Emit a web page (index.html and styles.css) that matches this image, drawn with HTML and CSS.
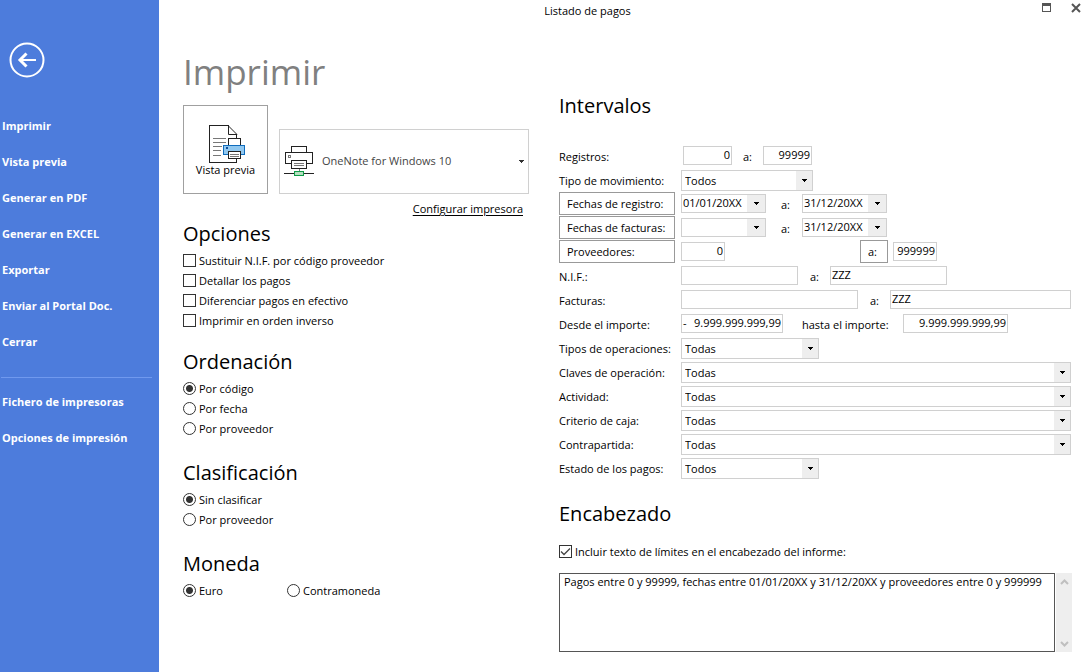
FILE: index.html
```
<!DOCTYPE html>
<html lang="es">
<head>
<meta charset="utf-8">
<title>Listado de pagos</title>
<link rel="stylesheet" href="styles.css">
</head>
<body>
<div class="app">
  <nav class="sidebar">
    <button class="back" type="button" aria-label="Volver">
      <svg width="36" height="36" viewBox="0 0 36 36" fill="none" stroke="#fff">
        <circle cx="18" cy="18" r="16.5" stroke-width="2"/>
        <path d="M27 18H11" stroke-width="2"/>
        <path d="M17.500 11.500L11 18l6.500 6.500" stroke-width="3"/>
      </svg>
    </button>
    <ul class="menu">
      <li><a href="#">Imprimir</a></li>
      <li><a href="#">Vista previa</a></li>
      <li><a href="#">Generar en PDF</a></li>
      <li><a href="#">Generar en EXCEL</a></li>
      <li><a href="#">Exportar</a></li>
      <li><a href="#">Enviar al Portal Doc.</a></li>
      <li><a href="#">Cerrar</a></li>
    </ul>
    <ul class="menu menu-extra">
      <li><a href="#">Fichero de impresoras</a></li>
      <li><a href="#">Opciones de impresión</a></li>
    </ul>
  </nav>

  <div class="main">
    <header class="titlebar">
      <div class="window-title">Listado de pagos</div>
      <div class="window-controls">
        <button type="button" aria-label="Maximizar">
          <svg width="9" height="9" viewBox="0 0 9 9" shape-rendering="crispEdges"><path d="M0 0h9v9H0zM1 3v5h7V3z" fill="#555" fill-rule="evenodd"/></svg>
        </button>
        <button type="button" aria-label="Cerrar ventana">
          <svg width="10" height="10" viewBox="0 0 10 10"><path d="M1 1l8 8M9 1L1 9" stroke="#555" stroke-width="2"/></svg>
        </button>
      </div>
    </header>

    <form class="content">
      <div class="left">
        <h1>Imprimir</h1>
        <div class="printer-row">
          <button class="preview" type="button">
            <svg width="37" height="39" viewBox="0 0 37 39" fill="none" shape-rendering="crispEdges">
              <path d="M28 16V10L19 1H1v37h27v-4" fill="#fff" stroke="none"/>
              <path d="M27.500 14V9.500M19.500 .5H.5v37h27V34" stroke="#222"/>
              <path d="M19.500 .5V9.500H28M19 .5L28 9.500" stroke="#222" shape-rendering="auto"/>
              <path d="M4 13.500h13M4 17.500h13M4 21.500h9M4 25.500h8M4 30.500h8" stroke="#777"/>
              <path d="M19.500 20V13.500h12V20" fill="#fff" stroke="#222"/>
              <path d="M14.500 20.500h21v9h-21z" fill="#91c8f0" stroke="#0f6cbd"/>
              <path d="M17 22h2v2h-2z" fill="#0f4f9c"/>
              <path d="M19.500 26.500h12v7h-12z" fill="#fff" stroke="#222"/>
              <path d="M21 29.500h9M21 31.500h9" stroke="#777"/>
            </svg>
            <span>Vista previa</span>
          </button>
          <div class="printer">
            <svg class="printer-icon" width="30" height="30" viewBox="0 0 30 30" fill="none" shape-rendering="crispEdges">
              <path d="M7.500 6V.5h15V6M7 17.500H1.500V6.500h27v11H23" stroke="#222"/>
              <path d="M4.500 9.500h2v2h-2z" stroke="#777"/>
              <path d="M7.500 14.500h15v8h-15z" fill="#fff" stroke="#222"/>
              <path d="M10 17.500h10M10 19.500h10M15 23v2" stroke="#777"/>
              <path d="M0 27.500h30" stroke="#222"/>
              <path d="M10.500 25.500h9v4h-9z" fill="#b5e0c0" stroke="#109b48"/>
            </svg>
            <select class="printer-select" aria-label="Impresora"><option>OneNote for Windows 10</option></select>
          </div>
        </div>
        <a class="config" href="#">Configurar impresora</a>

        <div class="groups">
          <section class="group">
            <h2>Opciones</h2>
            <label class="choice"><input type="checkbox">Sustituir N.I.F. por código proveedor</label>
            <label class="choice"><input type="checkbox">Detallar los pagos</label>
            <label class="choice"><input type="checkbox">Diferenciar pagos en efectivo</label>
            <label class="choice"><input type="checkbox">Imprimir en orden inverso</label>
          </section>
          <section class="group">
            <h2>Ordenación</h2>
            <label class="choice"><input type="radio" name="orden" checked>Por código</label>
            <label class="choice"><input type="radio" name="orden">Por fecha</label>
            <label class="choice"><input type="radio" name="orden">Por proveedor</label>
          </section>
          <section class="group">
            <h2>Clasificación</h2>
            <label class="choice"><input type="radio" name="clase" checked>Sin clasificar</label>
            <label class="choice"><input type="radio" name="clase">Por proveedor</label>
          </section>
          <section class="group">
            <h2>Moneda</h2>
            <div class="choice-row">
              <label class="choice"><input type="radio" name="moneda" checked>Euro</label>
              <label class="choice"><input type="radio" name="moneda">Contramoneda</label>
            </div>
          </section>
        </div>
      </div>

      <div class="right">
        <h2>Intervalos</h2>
        <div class="fields">
          <div class="field indent">
            <label class="name" for="reg1">Registros:</label>
            <input class="box w-short num" id="reg1" value="0">
            <label class="to" for="reg2">a:</label>
            <input class="box w-short num" id="reg2" value="99999">
          </div>
          <div class="field">
            <label class="name" for="tipo">Tipo de movimiento:</label>
            <select class="w-type" id="tipo"><option>Todos</option></select>
          </div>
          <div class="field">
            <div class="name"><button class="picker" type="button">Fechas de registro:</button></div>
            <div class="date"><input id="fr1" aria-label="Fecha de registro desde" value="01/01/20XX"><button type="button" aria-label="Abrir calendario"></button></div>
            <label class="to to-date" for="fr2">a:</label>
            <div class="date"><input id="fr2" value="31/12/20XX"><button type="button" aria-label="Abrir calendario"></button></div>
          </div>
          <div class="field">
            <div class="name"><button class="picker" type="button">Fechas de facturas:</button></div>
            <div class="date"><input id="ff1" aria-label="Fecha de factura desde"><button type="button" aria-label="Abrir calendario"></button></div>
            <label class="to to-date" for="ff2">a:</label>
            <div class="date"><input id="ff2" value="31/12/20XX"><button type="button" aria-label="Abrir calendario"></button></div>
          </div>
          <div class="field">
            <div class="name"><button class="picker" type="button">Proveedores:</button></div>
            <input class="box w-code num" aria-label="Proveedor desde" value="0">
            <button class="picker picker-to" type="button">a:</button>
            <input class="box w-code num" aria-label="Proveedor hasta" value="999999">
          </div>
          <div class="field">
            <label class="name" for="nif1">N.I.F.:</label>
            <input class="box w-nif" id="nif1">
            <label class="to" for="nif2">a:</label>
            <input class="box w-nif" id="nif2" value="ZZZ">
          </div>
          <div class="field">
            <label class="name" for="fac1">Facturas:</label>
            <input class="box w-invoice" id="fac1">
            <label class="to" for="fac2">a:</label>
            <input class="box grow" id="fac2" value="ZZZ">
          </div>
          <div class="field">
            <label class="name" for="imp1">Desde el importe:</label>
            <div class="box amount"><span>-</span><input class="num" id="imp1" value="9.999.999.999,99"></div>
            <label class="until" for="imp2">hasta el importe:</label>
            <input class="box w-amount num" id="imp2" value="9.999.999.999,99">
          </div>
          <div class="field">
            <label class="name" for="ops">Tipos de operaciones:</label>
            <select class="w-list" id="ops"><option>Todas</option></select>
          </div>
          <div class="field">
            <label class="name" for="claves">Claves de operación:</label>
            <select class="grow" id="claves"><option>Todas</option></select>
          </div>
          <div class="field">
            <label class="name" for="act">Actividad:</label>
            <select class="grow" id="act"><option>Todas</option></select>
          </div>
          <div class="field">
            <label class="name" for="caja">Criterio de caja:</label>
            <select class="grow" id="caja"><option>Todas</option></select>
          </div>
          <div class="field">
            <label class="name" for="contra">Contrapartida:</label>
            <select class="grow" id="contra"><option>Todas</option></select>
          </div>
          <div class="field">
            <label class="name" for="estado">Estado de los pagos:</label>
            <select class="w-list" id="estado"><option>Todos</option></select>
          </div>
        </div>

        <h2 class="heading-header">Encabezado</h2>
        <label class="choice"><input type="checkbox" checked>Incluir texto de límites en el encabezado del informe:</label>
        <div class="memo">
          <textarea aria-label="Texto del encabezado">Pagos entre 0 y 99999, fechas entre 01/01/20XX y 31/12/20XX y proveedores entre 0 y 999999</textarea>
          <div class="scroll">
            <button type="button" aria-label="Subir"><svg width="9" height="6" viewBox="0 0 9 6" fill="none"><path d="M1 5l3.500-3.500L8 5" stroke="#bfbfbf" stroke-width="2"/></svg></button>
            <button type="button" aria-label="Bajar"><svg width="9" height="6" viewBox="0 0 9 6" fill="none"><path d="M1 1l3.500 3.500L8 1" stroke="#bfbfbf" stroke-width="2"/></svg></button>
          </div>
        </div>
      </div>
    </form>
  </div>
</div>
</body>
</html>
```
FILE: styles.css
```
* { box-sizing: border-box; }

body {
  margin: 0;
  background: #fff;
  color: #000;
  font: 11px/20px "Open Sans", "Noto Sans", sans-serif;
}

button, input, select, textarea {
  margin: 0;
  padding: 0;
  border: 0;
  border-radius: 0;
  background: none;
  color: inherit;
  font: inherit;
}

svg { display: block; }

h1, h2 { margin: 0; font-weight: 400; }
h1 { color: #808080; font-size: 35px; line-height: 48px; }
h2 { font-size: 20px; line-height: 28px; }

.app { display: flex; min-height: 100vh; }

/* Sidebar */
.sidebar {
  flex: 0 0 159px;
  padding-top: 42px;
  background: #4d7cdc;
}
.back { display: block; margin-left: 9px; }
.menu {
  margin: 30px 0 0;
  padding: 0;
  list-style: none;
}
.menu a {
  display: block;
  padding-left: 2px;
  color: #fff;
  font-weight: 700;
  line-height: 36px;
  text-decoration: none;
}
.menu-extra {
  margin: 17px 7px 0 1px;
  padding-top: 6px;
  border-top: 1px solid #7099ee;
}
.menu-extra a { padding-left: 1px; }

/* Title bar */
.main { flex: 1; min-width: 0; }
.titlebar { display: flex; height: 22px; }
.window-title {
  flex: 1;
  line-height: 22px;
  text-align: center;
}
.window-controls {
  display: flex;
  flex: 0 0 75px;
  gap: 20px;
  align-items: flex-start;
  justify-content: flex-end;
  padding: 3px 10px 0 0;
}

/* Columns */
.content {
  display: grid;
  grid-template-columns: 346px 1fr;
  gap: 30px;
  padding: 0 20px 0 24px;
}
.left { padding-top: 26px; }
.right { padding-top: 70px; }

.printer-row {
  display: flex;
  gap: 11px;
  align-items: flex-end;
  margin-top: 9px;
}
.preview {
  display: flex;
  flex: 0 0 85px;
  flex-direction: column;
  align-items: center;
  height: 89px;
  padding-top: 19px;
  border: 1px solid #a0a0a0;
  line-height: 12px;
}
.preview svg { margin-left: 3px; }
.printer { position: relative; flex: 1; }
.printer-icon {
  position: absolute;
  top: 17px;
  left: 5px;
  pointer-events: none;
}
.printer .printer-select {
  width: 100%;
  height: 65px;
  margin: 0;
  padding: 0 0 2px 42px;
  background: url("data:image/svg+xml,%3Csvg xmlns='http://www.w3.org/2000/svg' width='5' height='3' shape-rendering='crispEdges'%3E%3Cpath d='M0 0h5v1H4v1H3v1H2V2H1V1H0z' fill='%23333'/%3E%3C/svg%3E") no-repeat right 4px center;
  color: #444;
}
.config {
  display: block;
  padding: 5px 6px 0 0;
  color: #000;
  text-align: right;
  text-underline-offset: 2px;
}

.groups {
  display: flex;
  flex-direction: column;
  gap: 17px;
  margin-top: 1px;
}
.group h2 { margin-bottom: 3px; }
.group:nth-child(n+3) { margin-top: 3px; }
.choice {
  display: flex;
  gap: 3px;
  align-items: center;
}
.choice input {
  flex: none;
  width: 13px;
  height: 13px;
  margin-bottom: 2px;
  border: 1px solid #333;
  appearance: none;
}
.choice input[type="radio"] { border-radius: 50%; }
.choice input[type="radio"]:checked { background: radial-gradient(circle, #333 3px, transparent 4px); }
.choice input[type="checkbox"]:checked {
  background: url("data:image/svg+xml,%3Csvg xmlns='http://www.w3.org/2000/svg' width='11' height='11'%3E%3Cpath d='M1 5.500L4 8.500L10 2.500' fill='none' stroke='%23444' stroke-width='1.300'/%3E%3C/svg%3E") center no-repeat;
}
.choice-row { display: grid; grid-template-columns: 104px 1fr; }

/* Interval fields */
.fields { margin-top: 24px; }
.field {
  display: flex;
  align-items: flex-start;
  height: 24px;
  padding-top: 2px;
  line-height: 22px;
}
.name { flex: 0 0 122px; white-space: nowrap; }
.indent .name { flex-basis: 124px; }
.picker {
  display: block;
  width: 116px;
  height: 23px;
  margin-top: -2px;
  padding: 0 7px;
  border: 1px solid #999;
  line-height: 21px;
  text-align: left;
}
.picker-to { width: 28px; margin-left: 135px; margin-right: 5px; }

.box {
  height: 19px;
  padding: 0 1px 2px;
  border: 1px solid #d0d0d0;
  line-height: 15px;
}
.num { text-align: right; }
.w-short { width: 49px; }
.w-code { width: 44px; }
.w-nif { width: 117px; }
.w-invoice { width: 177px; }
.w-amount { width: 105px; }
.grow { flex: 1; min-width: 0; }
.to { flex: 0 0 32px; padding-left: 12px; }
.indent .to { flex-basis: 31px; padding-left: 11px; }
.to-date { flex-basis: 36px; padding-left: 15px; }
.amount { display: flex; width: 102px; }
.amount input { flex: 1; min-width: 0; }
.until { flex: 0 0 120px; padding-left: 19px; }

.date {
  display: flex;
  width: 85px;
  height: 19px;
  border: 1px solid #d0d0d0;
}
.date input {
  flex: 1;
  min-width: 0;
  padding: 0 0 2px 1px;
  line-height: 15px;
}
.date button { flex: 0 0 18px; }
.date button, select {
  background:
    url("data:image/svg+xml,%3Csvg xmlns='http://www.w3.org/2000/svg' width='5' height='3' shape-rendering='crispEdges'%3E%3Cpath d='M0 0h5v1H4v1H3v1H2V2H1V1H0z'/%3E%3C/svg%3E") no-repeat right 5px center,
    linear-gradient(#eee, #eee) no-repeat right / 16px 100%;
}
.date button {
  background-position: right 6px center, right;
  background-size: auto, 100% 100%;
}
select {
  height: 21px;
  padding-left: 3px;
  border: 1px solid #d0d0d0;
  line-height: 19px;
  appearance: none;
}
.w-type { width: 132px; }
.w-list { width: 138px; }

/* Header text */
.heading-header { margin: 20px 0 14px; }
.memo { display: flex; gap: 1px; margin: 11px -1px 0 0; }
.memo textarea {
  flex: 1;
  min-width: 0;
  height: 79px;
  padding: 0 4px;
  border: 1px solid #555;
  line-height: 16px;
  resize: none;
}
.scroll {
  display: flex;
  flex: 0 0 16px;
  flex-direction: column;
  justify-content: space-between;
  align-items: center;
  padding: 6px 0 5px;
  background: #eee;
}
```
